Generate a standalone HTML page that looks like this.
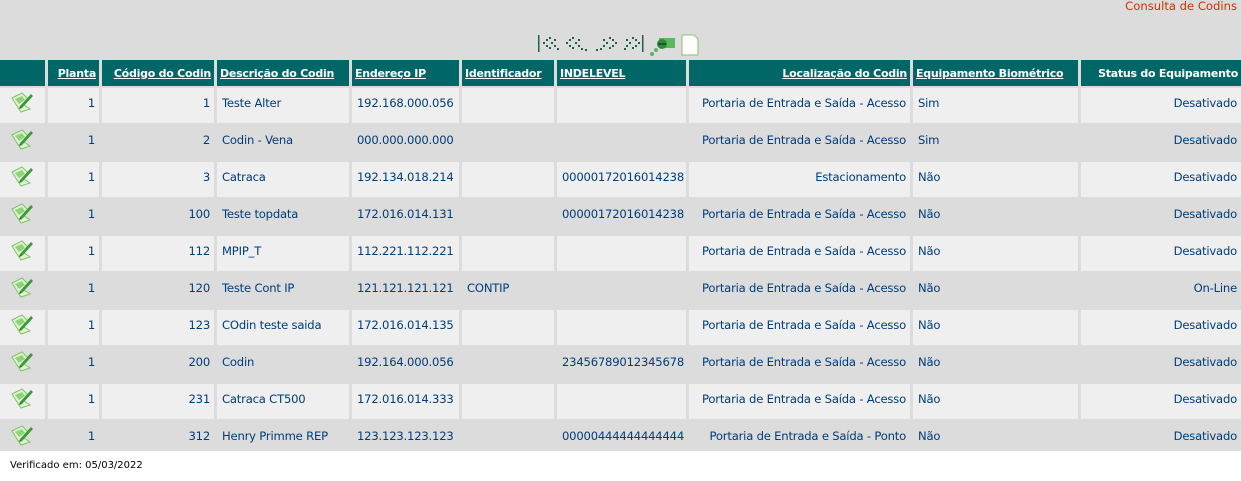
<!DOCTYPE html>
<html><head><meta charset="utf-8"><style>
html,body{margin:0;padding:0;background:#fff;width:1241px;height:481px;overflow:hidden}
body{font-family:Verdana,"DejaVu Sans",sans-serif;font-size:11.6px}
#top{background:#dcdcdc;height:451px;position:relative;overflow:hidden}
.title{position:absolute;right:4px;top:-1px;color:#cc3300;font-size:11.6px}
.nav{position:absolute;left:537px;top:33px}
table{position:absolute;left:-3px;top:58px;border-collapse:separate;border-spacing:3px 2px;table-layout:fixed;width:1247px}
th{background:#006666;color:#fff;height:26px;padding:0 3px;font-weight:bold;text-decoration:underline;text-align:left;white-space:nowrap;font-size:11px;letter-spacing:-0.25px;overflow:hidden}
th.r{text-align:right}
td{height:30px;padding:0 4px 5px 5px;color:#003d7a;white-space:nowrap;font-size:11.6px;letter-spacing:-0.2px;overflow:hidden}
tr.o td{background:#efefef}
tr.e td{background:#dcdcdc}
.r{text-align:right}
.ic{padding:0 0 4px 0;text-align:center}
.foot{position:absolute;left:10px;top:460px;font-size:10px;color:#000}
</style></head><body>
<div id="top">
<div class="title">Consulta de Codins</div>
<svg class="nav" width="165" height="24" viewBox="0 0 165 24">
<g fill="#1f5f4f">
<rect x="1" y="2" width="1.5" height="17"/>
<rect x="6" y="9" width="2" height="2"/><rect x="9" y="6" width="2" height="2"/><rect x="9" y="12" width="2" height="2"/><rect x="12" y="4" width="2" height="2"/><rect x="12" y="14" width="2" height="2"/><rect x="14" y="9" width="2" height="2"/><rect x="17" y="6" width="2" height="2"/><rect x="17" y="12" width="2" height="2"/><rect x="20" y="15" width="2" height="2"/>
<rect x="29" y="9" width="2" height="2"/><rect x="32" y="6" width="2" height="2"/><rect x="32" y="12" width="2" height="2"/><rect x="35" y="4" width="2" height="2"/><rect x="35" y="14" width="2" height="2"/><rect x="38" y="9" width="2" height="2"/><rect x="41" y="6" width="2" height="2"/><rect x="41" y="12" width="2" height="2"/><rect x="44" y="15" width="2" height="2"/><rect x="48" y="16" width="2" height="2"/>
<rect x="59" y="16" width="2" height="2"/><rect x="63" y="15" width="2" height="2"/><rect x="66" y="6" width="2" height="2"/><rect x="66" y="12" width="2" height="2"/><rect x="69" y="9" width="2" height="2"/><rect x="72" y="4" width="2" height="2"/><rect x="72" y="14" width="2" height="2"/><rect x="75" y="6" width="2" height="2"/><rect x="75" y="12" width="2" height="2"/><rect x="78" y="9" width="2" height="2"/>
<rect x="87" y="15" width="2" height="2"/><rect x="89" y="6" width="2" height="2"/><rect x="89" y="12" width="2" height="2"/><rect x="92" y="9" width="2" height="2"/><rect x="95" y="4" width="2" height="2"/><rect x="95" y="14" width="2" height="2"/><rect x="98" y="6" width="2" height="2"/><rect x="98" y="12" width="2" height="2"/><rect x="101" y="9" width="2" height="2"/>
<rect x="105" y="2" width="1.5" height="17"/>
</g>
<rect x="122" y="5" width="16" height="10" fill="#5cb85c"/>
<circle cx="125" cy="11" r="5" fill="#2e8b3e"/>
<rect x="121" y="10" width="8" height="2" fill="#1a5a2a"/>
<circle cx="119" cy="17" r="2" fill="#5cb85c"/><circle cx="115" cy="21" r="2" fill="#5cb85c"/>
<path d="M145 2 H157 L161 6 V22 H145 Z" fill="#fff" stroke="#8cc06c" stroke-width="1"/>
</svg>
<table>
<colgroup><col style="width:45px"><col style="width:51px"><col style="width:112px"><col style="width:132px"><col style="width:107px"><col style="width:92px"><col style="width:129px"><col style="width:221px"><col style="width:165px"><col style="width:160px"></colgroup>
<tr><th></th><th class="r">Planta</th><th class="r">Código do Codin</th><th>Descrição do Codin</th><th>Endereço IP</th><th>Identificador</th><th>INDELEVEL</th><th class="r">Localização do Codin</th><th>Equipamento Biométrico</th><th class="r" style="text-decoration:none">Status do Equipamento</th></tr>
<tr class="o"><td class="ic">E</td><td class="r">1</td><td class="r">1</td><td>Teste Alter</td><td>192.168.000.056</td><td></td><td></td><td class="r">Portaria de Entrada e Saída - Acesso</td><td>Sim</td><td class="r">Desativado</td></tr>
<tr class="e"><td class="ic">E</td><td class="r">1</td><td class="r">2</td><td>Codin - Vena</td><td>000.000.000.000</td><td></td><td></td><td class="r">Portaria de Entrada e Saída - Acesso</td><td>Sim</td><td class="r">Desativado</td></tr>
<tr class="o"><td class="ic">E</td><td class="r">1</td><td class="r">3</td><td>Catraca</td><td>192.134.018.214</td><td></td><td>00000172016014238</td><td class="r">Estacionamento</td><td>Não</td><td class="r">Desativado</td></tr>
<tr class="e"><td class="ic">E</td><td class="r">1</td><td class="r">100</td><td>Teste topdata</td><td>172.016.014.131</td><td></td><td>00000172016014238</td><td class="r">Portaria de Entrada e Saída - Acesso</td><td>Não</td><td class="r">Desativado</td></tr>
<tr class="o"><td class="ic">E</td><td class="r">1</td><td class="r">112</td><td>MPIP_T</td><td>112.221.112.221</td><td></td><td></td><td class="r">Portaria de Entrada e Saída - Acesso</td><td>Não</td><td class="r">Desativado</td></tr>
<tr class="e"><td class="ic">E</td><td class="r">1</td><td class="r">120</td><td>Teste Cont IP</td><td>121.121.121.121</td><td>CONTIP</td><td></td><td class="r">Portaria de Entrada e Saída - Acesso</td><td>Não</td><td class="r">On-Line</td></tr>
<tr class="o"><td class="ic">E</td><td class="r">1</td><td class="r">123</td><td>COdin teste saida</td><td>172.016.014.135</td><td></td><td></td><td class="r">Portaria de Entrada e Saída - Acesso</td><td>Não</td><td class="r">Desativado</td></tr>
<tr class="e"><td class="ic">E</td><td class="r">1</td><td class="r">200</td><td>Codin</td><td>192.164.000.056</td><td></td><td>23456789012345678</td><td class="r">Portaria de Entrada e Saída - Acesso</td><td>Não</td><td class="r">Desativado</td></tr>
<tr class="o"><td class="ic">E</td><td class="r">1</td><td class="r">231</td><td>Catraca CT500</td><td>172.016.014.333</td><td></td><td></td><td class="r">Portaria de Entrada e Saída - Acesso</td><td>Não</td><td class="r">Desativado</td></tr>
<tr class="e"><td class="ic">E</td><td class="r">1</td><td class="r">312</td><td>Henry Primme REP</td><td>123.123.123.123</td><td></td><td>00000444444444444</td><td class="r">Portaria de Entrada e Saída - Ponto</td><td>Não</td><td class="r">Desativado</td></tr>
</table>
</div>
<div class="foot">Verificado em: 05/03/2022</div>
<script>
var svg='<svg width="26" height="22" viewBox="0 0 26 22"><path d="M2 7 L12 2 L18 8 L14 14 L20 18 L11 21 L7 15 Z" fill="#dff5d0" stroke="#7cc46a" stroke-width="1"/><path d="M5 8 L12 5 L15 9 L9 13 Z" fill="#8fd27a"/><path d="M10 15 L21 3 L23 5 L12 17 Z" fill="#3a9a3a"/><path d="M10 15 L12 17 L9 18 Z" fill="#2b6b2b"/></svg>';
document.querySelectorAll('.ic').forEach(function(c){if(c.textContent==='E')c.innerHTML=svg;});
</script>
</body></html>
